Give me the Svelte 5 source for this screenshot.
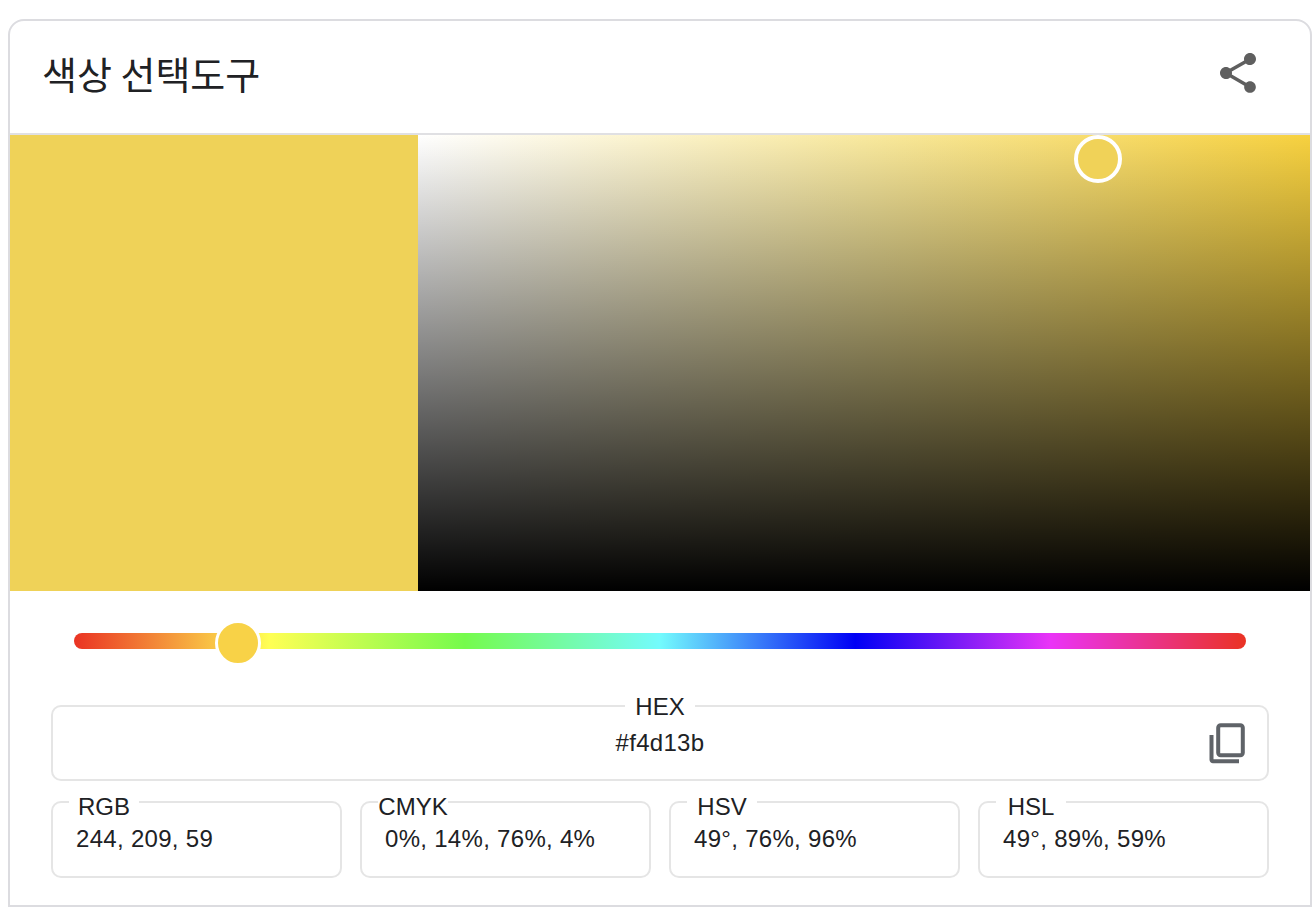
<script>
  // color picker card, values are static
  const formats = [
    { name: 'RGB', value: '244, 209, 59' },
    { name: 'CMYK', value: '0%, 14%, 76%, 4%' },
    { name: 'HSV', value: '49°, 76%, 96%' },
    { name: 'HSL', value: '49°, 89%, 59%' }
  ];
</script>

<div class="card">
  <header class="head">
    <h2>색상 선택도구</h2>
    <svg class="share" viewBox="0 0 24 24" aria-label="공유">
      <path d="M18 16.08c-.76 0-1.44.3-1.96.77L8.91 12.7c.05-.23.09-.46.09-.7s-.04-.47-.09-.7l7.05-4.11c.54.5 1.25.81 2.04.81 1.66 0 3-1.34 3-3s-1.34-3-3-3-3 1.34-3 3c0 .24.04.47.09.7L8.04 9.81C7.5 9.31 6.79 9 6 9c-1.66 0-3 1.34-3 3s1.34 3 3 3c.79 0 1.5-.31 2.04-.81l7.12 4.16c-.05.21-.08.43-.08.65 0 1.61 1.31 2.92 2.92 2.92 1.61 0 2.92-1.31 2.92-2.92s-1.31-2.92-2.92-2.92z" />
    </svg>
  </header>

  <div class="picker">
    <div class="swatch"></div>
    <div class="area">
      <span class="marker"></span>
    </div>
  </div>

  <div class="hue">
    <span class="thumb"></span>
  </div>

  <fieldset class="hex">
    <legend>HEX</legend>
    <div class="hex-value">#f4d13b</div>
    <svg class="copy" viewBox="0 0 40 44" aria-label="복사">
      <rect x="12.2" y="3.2" width="24.6" height="30.1" rx="2.5" />
      <path d="M5.5 13V37.7a1.5 1.5 0 0 0 1.5 1.5H33" />
    </svg>
  </fieldset>

  <div class="formats">
    {#each formats as f}
      <fieldset class="fmt">
        <legend>{f.name}</legend>
        <div class="fmt-value">{f.value}</div>
      </fieldset>
    {/each}
  </div>
</div>

<style>
  :global(body) {
    background: #fff;
  }

  .card {
    box-sizing: border-box;
    height: 888px;
    margin: 19px 4px 0 8px;
    border: 2px solid #dcdce0;
    border-radius: 16px 16px 0 0;
    font-family: "Liberation Sans", Arial, sans-serif;
    font-size: 24px;
    color: #202124;
  }

  .head {
    height: 112px;
    border-bottom: 2px solid #e0e0e3;
    display: flex;
    align-items: center;
    justify-content: space-between;
    padding: 0 48px 0 32px;
  }

  h2 {
    margin: 0 0 8px;
    font-family: "Noto Sans CJK KR", sans-serif;
    font-size: 38px;
    font-weight: 400;
    line-height: 48px;
  }

  .share {
    width: 48px;
    height: 48px;
    margin-bottom: 8px;
    fill: #5f5f5f;
  }

  .picker {
    display: flex;
    height: 456px;
  }

  .swatch {
    width: 408px;
    background: #efd258;
  }

  .area {
    flex: 1;
    position: relative;
    background:
      linear-gradient(to bottom, rgba(0, 0, 0, 0), #000),
      linear-gradient(to right, #fff, #f9e99e 50%, #f7d13f);
  }

  .marker {
    position: absolute;
    left: 656px;
    top: 0;
    box-sizing: border-box;
    width: 48px;
    height: 48px;
    border: 4px solid #fff;
    border-radius: 50%;
    background: #f0d258;
  }

  .hue {
    position: relative;
    height: 16px;
    margin: 42px 64px 0;
    border-radius: 8px;
    background: linear-gradient(to right, #ea3323, #ffff54, #75fb4c, #73fbfd, #0000f5, #ea33f7, #ea3323);
  }

  .thumb {
    position: absolute;
    left: 141px;
    top: -13px;
    width: 40px;
    height: 40px;
    border: 3px solid #fff;
    border-radius: 50%;
    background: #f8d247;
  }

  fieldset {
    margin: 0;
    padding: 0;
    border: 2px solid #e5e5e5;
    border-radius: 10px;
    box-sizing: border-box;
  }

  legend {
    box-sizing: border-box;
    display: flex;
    justify-content: center;
    width: 70px;
    padding: 0;
    line-height: 26px;
  }

  .hex {
    position: relative;
    height: 89px;
    margin: 43px 41px 0;
  }

  .hex legend {
    margin: 0 auto;
    padding-top: 2px;
  }

  .hex-value {
    text-align: center;
    line-height: 28px;
    margin-top: 9px;
    letter-spacing: 0.3px;
  }

  .copy {
    position: absolute;
    right: 21px;
    top: 2px;
    width: 40px;
    height: 44px;
    fill: none;
    stroke: #5f6368;
    stroke-width: 4;
  }

  .formats {
    display: grid;
    grid-template-columns: repeat(4, 1fr);
    gap: 18px;
    margin: 3px 41px 0;
  }

  .fmt {
    height: 94px;
    padding-left: 23px;
  }

  .fmt legend {
    margin-left: -7px;
    padding-top: 10px;
  }

  .fmt-value {
    margin-top: 5px;
    line-height: 28px;
    letter-spacing: 0.3px;
  }
</style>
